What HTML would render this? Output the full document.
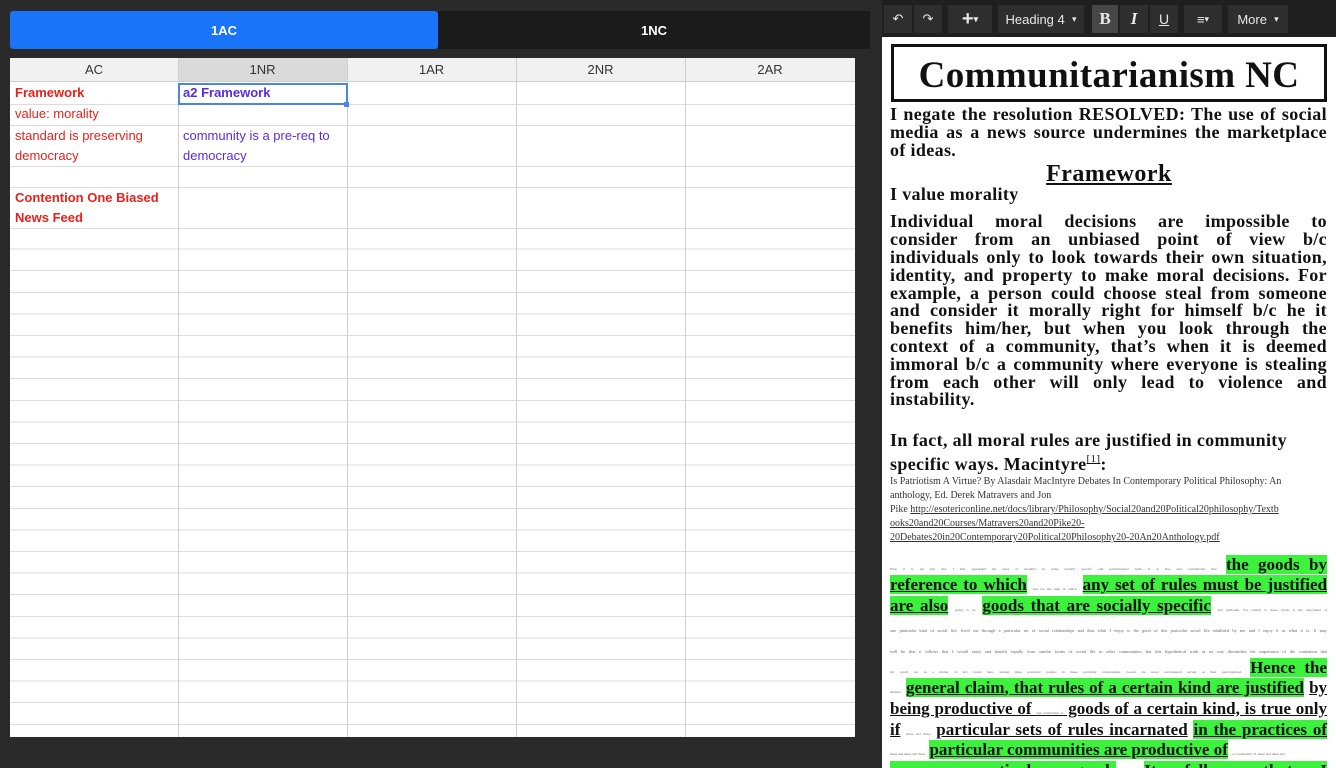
<!DOCTYPE html>
<html><head><meta charset="utf-8">
<style>
*{margin:0;padding:0;box-sizing:border-box}
body{width:1336px;height:768px;overflow:hidden;background:#2a2a2b;font-family:"Liberation Sans",sans-serif;position:relative}
.abs{position:absolute}
.tab{position:absolute;top:11px;height:38px;color:#fff;font-weight:bold;font-size:13px;display:flex;align-items:center;justify-content:center}
#grid{position:absolute;left:10px;top:58px;width:845px;height:679px;background:#fff;
background-image:repeating-linear-gradient(to bottom,transparent 0,transparent 20.6px,#dcdcdc 20.6px,#dcdcdc 21.6px);background-position:0 170px}
#gridtop{position:absolute;left:0;top:0;width:845px;height:170px;background:#fff}
.hl{position:absolute;left:0;width:845px;height:1px;background:#dcdcdc}
.vl{position:absolute;top:0;width:1px;height:679px;background:#d0d0d0}
.hd{position:absolute;top:0;height:24px;background:#f1f1f1;font-size:13px;color:#333;display:flex;align-items:center;justify-content:center;border-bottom:1px solid #d0d0d0}
.c{position:absolute;font-size:13px;line-height:20px}
.red{color:#e8211b}.pur{color:#5a2be0}
#tb{position:absolute;left:882px;top:0;width:454px;height:37px;background:#1f1f1f}
.bt{position:absolute;top:5px;height:28px;background:#2e2e2e;color:#e8e8e8;font-size:13px;display:flex;align-items:center;justify-content:center}
#doc{position:absolute;left:882px;top:37px;width:454px;height:731px;background:#fff;overflow:hidden;font-family:"Liberation Serif",serif;font-weight:bold;color:#111}
.l{position:absolute;left:8px;width:437px;white-space:nowrap;text-align:justify;text-align-last:justify;font-size:18px;letter-spacing:0.35px;line-height:18px}
.k{font-size:17px;letter-spacing:0}
.s{font-size:10px;font-weight:normal;color:#333;line-height:13px;letter-spacing:0}
.g{background:#3cf23c}
.u{text-decoration:underline}
.t{font-size:3.5px;font-weight:normal;color:#666;letter-spacing:0}
</style></head><body>
<div class="tab" style="left:10px;width:428px;background:#1a74fa;border-radius:3px">1AC</div>
<div class="tab" style="left:438px;width:432px;background:#1b1b1c">1NC</div>

<div id="grid">
<div id="gridtop"></div>
<div class="hd" style="left:0;width:168px">AC</div>
<div class="hd" style="left:168px;width:169px;background:#dadada">1NR</div>
<div class="hd" style="left:337px;width:169px">1AR</div>
<div class="hd" style="left:506px;width:169px">2NR</div>
<div class="hd" style="left:675px;width:170px">2AR</div>
<div class="hl" style="top:46px"></div>
<div class="hl" style="top:67px"></div>
<div class="hl" style="top:108px"></div>
<div class="hl" style="top:129px"></div>
<div class="hl" style="top:170px"></div>
<div class="vl" style="left:168px"></div>
<div class="vl" style="left:337px"></div>
<div class="vl" style="left:506px"></div>
<div class="vl" style="left:675px"></div>
<div class="c red" style="left:5px;top:25px;font-weight:bold">Framework</div>
<div class="c red" style="left:5px;top:46px">value: morality</div>
<div class="c red" style="left:5px;top:68px">standard is preserving<br>democracy</div>
<div class="c red" style="left:5px;top:130px;font-weight:bold">Contention One Biased<br>News Feed</div>
<div class="abs" style="left:168px;top:25px;width:170px;height:22px;border:2px solid #4a86e8"></div>
<div class="abs" style="left:334px;top:44px;width:5px;height:5px;background:#4a86e8"></div>
<div class="c pur" style="left:173px;top:25px;font-weight:bold">a2 Framework</div>
<div class="c pur" style="left:173px;top:68px">community is a pre-req to<br>democracy</div>
</div>

<div id="tb">
<div class="bt" style="left:2px;width:28px">&#x21B6;</div>
<div class="bt" style="left:32px;width:28px">&#x21B7;</div>
<div class="bt" style="left:66px;width:44px;font-size:20px;font-weight:bold">+<span style="font-size:9px">&#9662;</span></div>
<div class="bt" style="left:116px;width:86px">Heading 4 &nbsp;<span style="font-size:9px">&#9662;</span></div>
<div class="bt" style="left:210px;width:26px;background:#474747;font-family:'Liberation Serif',serif;font-weight:bold;font-size:17px">B</div>
<div class="bt" style="left:238px;width:28px;font-family:'Liberation Serif',serif;font-style:italic;font-weight:bold;font-size:17px">I</div>
<div class="bt" style="left:268px;width:28px;text-decoration:underline;font-size:14px">U</div>
<div class="bt" style="left:302px;width:38px">&#8801;<span style="font-size:9px">&#9662;</span></div>
<div class="bt" style="left:346px;width:60px">More &nbsp;<span style="font-size:9px">&#9662;</span></div>
</div>

<div id="doc">
<div class="abs" style="left:9px;top:7px;width:436px;height:58px;border:3px solid #111;display:flex;align-items:center;justify-content:center;font-size:37px;letter-spacing:0.4px;padding-top:4px">Communitarianism NC</div>
<div class="l" style="top:68px">I negate the resolution RESOLVED: The use of social</div>
<div class="l" style="top:86px">media as a news source undermines the marketplace</div>
<div class="l" style="top:104px;text-align-last:left">of ideas.</div>
<div class="abs u" style="left:0;width:454px;top:124px;text-align:center;font-size:24px;letter-spacing:0.5px">Framework</div>
<div class="l" style="top:148px;text-align-last:left">I value morality</div>
<div class="l" style="top:175px">Individual moral decisions are impossible to</div>
<div class="l" style="top:193px">consider from an unbiased point of view b/c</div>
<div class="l" style="top:211px">individuals only to look towards their own situation,</div>
<div class="l" style="top:229px">identity, and property to make moral decisions. For</div>
<div class="l" style="top:247px">example, a person could choose steal from someone</div>
<div class="l" style="top:264px">and consider it morally right for himself b/c he it</div>
<div class="l" style="top:282px">benefits him/her, but when you look through the</div>
<div class="l" style="top:300px">context of a community, that’s when it is deemed</div>
<div class="l" style="top:318px">immoral b/c a community where everyone is stealing</div>
<div class="l" style="top:336px">from each other will only lead to violence and</div>
<div class="l" style="top:353px;text-align-last:left">instability.</div>
<div class="l" style="top:394px;text-align-last:left">In fact, all moral rules are justified in community</div>
<div class="l" style="top:418px;text-align-last:left">specific ways. Macintyre<sup style="font-size:11px;font-weight:normal;text-decoration:underline;line-height:0;vertical-align:8px">[1]</sup>:</div>
<div class="l s" style="top:438px;text-align-last:left">Is Patriotism A Virtue? By Alasdair MacIntyre Debates In Contemporary Political Philosophy: An</div>
<div class="l s" style="top:452px;text-align-last:left">anthology, Ed. Derek Matravers and Jon</div>
<div class="l s" style="top:466px;text-align-last:left">Pike <span class="u">http://esotericonline.net/docs/library/Philosophy/Social20and20Political20philosophy/Textb</span></div>
<div class="l s u" style="top:480px;text-align-last:left">ooks20and20Courses/Matravers20and20Pike20-</div>
<div class="l s u" style="top:494px;text-align-last:left">20Debates20in20Contemporary20Political20Philosophy20-20An20Anthology.pdf</div>
<div class="l k" style="top:519px"><span class="t">First, it is not just that I first apprehend the rules of morality in some socially specific and particularized form. It is also and correlatively that</span> <span class="g">the goods by</span></div>
<div class="l k" style="top:539px"><span class="g u">reference to which</span> <span class="t">and for the sake of which</span> <span class="g u">any set of rules must be justified</span></div>
<div class="l k" style="top:560px"><span class="g u">are also</span> <span class="t">going to be</span> <span class="g u">goods that are socially specific</span> <span class="t">and particular. For central to those goods is the enjoyment of</span></div>
<div class="l t" style="top:585px;font-size:4.3px">one particular kind of social life, lived out through a particular set of social relationships and thus what I enjoy is the good of this particular social life inhabited by me and I enjoy it as what it is. It may</div>
<div class="l t" style="top:606px;font-size:4.3px">well be that it follows that I would enjoy and benefit equally from similar forms of social life in other communities; but this hypothetical truth in no way diminishes the importance of the contention that</div>
<div class="l k" style="top:622px"><span class="t">my goods are as a matter of fact found here, among these particular people, in these particular relationships. Goods are never encountered except as thus particularized</span> <span class="g">Hence the</span></div>
<div class="l k" style="top:642px"><span class="t">abstract</span> <span class="g u">general claim</span><span class="g u">, that rules of a certain kind are justified</span> <span class="u">by</span></div>
<div class="l k u" style="top:663px">being productive of <span class="t">and constitutive of</span> goods of a certain kind, is true only</div>
<div class="l k" style="top:684px"><span class="u">if</span> <span class="t">these and these</span> <span class="u">particular sets of rules incarnated</span> <span class="g u">in the practices of</span></div>
<div class="l k" style="top:704px;text-align-last:left"><span class="t">these and these and these</span> <span class="g u">particular communities are productive of</span> <span class="t">or constitutive of, these and these and</span></div>
<div class="l k" style="top:725px"><span class="g">&nbsp;&nbsp;&nbsp;particular goods</span> <span class="g">It follows that I</span></div>
</div>
</body></html>
